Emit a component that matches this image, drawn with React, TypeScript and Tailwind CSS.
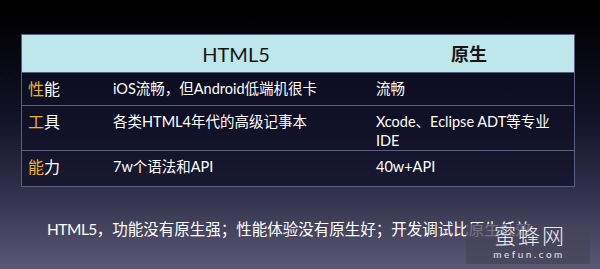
const rows = [
  { label: ["性", "能"], h5: "iOS流畅，但Android低端机很卡", native: ["流畅"], h: "h-[33px]" },
  { label: ["工", "具"], h5: "各类HTML4年代的高级记事本", native: ["Xcode、Eclipse ADT等专业", "IDE"], h: "h-[45px]" },
  { label: ["能", "力"], h5: "7w个语法和API", native: ["40w+API"], h: "h-[35px]" },
];

export default function App() {
  return (
    <div className="relative w-[600px] h-[269px] overflow-hidden bg-[linear-gradient(180deg,#000_0%,#040409_14%,#13132a_45%,#302f4a_70%,#5a5872_100%)] font-['Lato','Noto_Sans_CJK_SC',sans-serif] text-white">
      <div className="pt-[34px] pl-[21px]">
        <div className="w-[554px] border border-[#5a5f80]">
          {/* header */}
          <div className="grid grid-cols-[84px_260px_1fr] h-[38px] items-center bg-[#bde7ea] text-[#161616] border-b border-[#5a5f80]">
            <div />
            <div className="text-center text-[20px] leading-none">HTML5</div>
            <div className="text-center text-[18px] leading-none font-semibold pr-[2px]">原生</div>
          </div>
          {rows.map((r, i) => (
            <div
              key={i}
              className={`grid grid-cols-[84px_260px_1fr] ${r.h} bg-[#0f0f26]/70 ${i < rows.length - 1 ? "border-b border-[#5a5f80]" : ""}`}
            >
              <div className="pl-[6px] pt-[6px] text-[16px] leading-[20px]">
                <span className="text-[#f1b325]">{r.label[0]}</span>
                <span>{r.label[1]}</span>
              </div>
              <div className="pl-[7px] pt-[6px] text-[14.5px] leading-[20px]">{r.h5}</div>
              <div className="pl-[10px] pt-[6px] text-[14.5px] leading-[19px]">
                {r.native.map((t, j) => (
                  <div key={j}>{t}</div>
                ))}
              </div>
            </div>
          ))}
        </div>
      </div>
      <p className="mt-[30px] pl-[47px] text-[15.5px] leading-[24px]">
        <span className="tracking-[-0.5px]">HTML5</span>，功能没有原生强；性能体验没有原生好；开发调试比原生低效
      </p>
      {/* watermark */}
      <div className="absolute left-[466px] top-[224px] w-[124px] h-[40px] bg-[#45445a]/75 flex flex-col items-center">
        <div className="text-[22px] leading-[24px] font-light text-white/90 tracking-[2px] pl-[4px]">蜜蜂网</div>
        <div className="text-[10px] leading-[13px] tracking-[2.5px] pl-[2px] text-white/85">mefun.com</div>
      </div>
    </div>
  );
}
